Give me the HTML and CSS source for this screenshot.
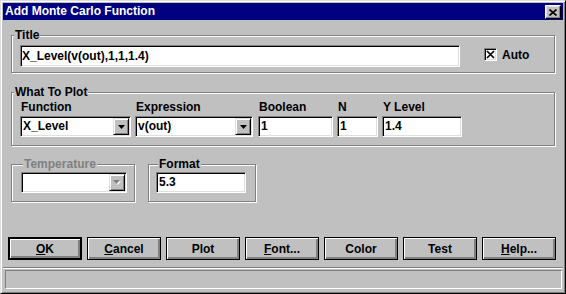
FILE: index.html
```html
<!DOCTYPE html>
<html>
<head>
	<meta charset="utf-8"/>
	<title>Add Monte Carlo Function</title>
	<link rel="stylesheet" href="styles.css">
</head>
<body>
	<div class="window">
		<div class="titlebar">
			<span class="caption">Add Monte Carlo Function</span>
			<span class="close"><svg width="8" height="7" viewBox="0 0 8 7"><path d="M0.5 0.5L7.5 6.5M7.5 0.5L0.5 6.5" stroke="#000" stroke-width="1.6"/></svg></span>
		</div>

		<div class="groups">
			<fieldset class="group group-title">
				<legend>Title</legend>
				<div class="title-row">
					<div class="field w-title">X_Level(v(out),1,1,1.4)</div>
					<label class="check">
						<span class="box"><svg width="9" height="9" viewBox="0 0 9 9"><path d="M1 1L8 8M8 1L1 8" stroke="#000" stroke-width="1.7"/></svg></span>
						Auto
					</label>
				</div>
			</fieldset>

			<fieldset class="group group-plot">
				<legend>What To Plot</legend>
				<div class="plot-row">
					<div class="col">
						<div class="lbl">Function</div>
						<div class="combo w-func">
							<span class="val">X_Level</span>
							<span class="drop"><svg width="7" height="4" viewBox="0 0 7 4"><path d="M0 0H7L3.5 4Z"/></svg></span>
						</div>
					</div>
					<div class="col col-expr">
						<div class="lbl">Expression</div>
						<div class="combo w-expr">
							<span class="val">v(out)</span>
							<span class="drop"><svg width="7" height="4" viewBox="0 0 7 4"><path d="M0 0H7L3.5 4Z"/></svg></span>
						</div>
					</div>
					<div class="col col-bool">
						<div class="lbl">Boolean</div>
						<div class="field w-bool">1</div>
					</div>
					<div class="col col-n">
						<div class="lbl">N</div>
						<div class="field w-n">1</div>
					</div>
					<div class="col col-y">
						<div class="lbl">Y Level</div>
						<div class="field w-y">1.4</div>
					</div>
				</div>
			</fieldset>

			<div class="lower">
				<fieldset class="group group-temp disabled">
					<legend>Temperature</legend>
					<div class="combo w-temp">
						<span class="val"></span>
						<span class="drop"><svg width="8" height="5" viewBox="0 0 8 5"><path d="M1 1H8L4.5 5Z" fill="#fff"/><path d="M0 0H7L3.5 4Z" fill="#808080"/></svg></span>
					</div>
				</fieldset>
				<fieldset class="group group-format">
					<legend>Format</legend>
					<div class="field w-format">5.3</div>
				</fieldset>
			</div>
		</div>

		<div class="buttons">
			<button class="btn default"><u>O</u>K</button>
			<button class="btn"><u>C</u>ancel</button>
			<button class="btn">Plot</button>
			<button class="btn"><u>F</u>ont...</button>
			<button class="btn">Color</button>
			<button class="btn">Test</button>
			<button class="btn"><u>H</u>elp...</button>
		</div>

		<div class="sep"></div>
		<div class="status"></div>
	</div>
</body>
</html>
```

FILE: styles.css
```css
*{margin:0;padding:0;box-sizing:border-box;}
body{
	background:#c0c0c0;
	font:bold 12px "Liberation Sans",Arial,sans-serif;
	color:#000;
}

/* window frame */
.window{
	width:566px;
	height:294px;
	background:#c0c0c0;
	border:1px solid;
	border-color:#dfdfdf #000 #000 #dfdfdf;
	box-shadow:inset 1px 1px #fff,inset -1px -1px #808080;
	padding:2px;
	display:flex;
	flex-direction:column;
}
.titlebar{
	height:17px;
	background:#000080;
	color:#fff;
	display:flex;
	justify-content:space-between;
}
.caption{
	line-height:17px;
	padding-left:2px;
}
.close{
	width:16px;
	height:14px;
	margin:2px 2px 0 0;
	background:#c0c0c0;
	border:1px solid;
	border-color:#fff #000 #000 #fff;
	box-shadow:inset -1px -1px #808080,inset 1px 1px #dfdfdf;
	display:flex;
	align-items:center;
	justify-content:center;
}
.close svg{display:block;}

/* group boxes (horizontal padding lives on the inner rows so the legend stays left) */
.groups{padding:0 8px;}
.group{
	border:1px solid #808080;
	box-shadow:1px 1px #fff,inset 1px 1px #fff;
	min-width:0;
}
.group legend{
	margin-left:2px;
	padding:0 1px;
	line-height:15px;
	background:#c0c0c0;
}
.group-title{
	margin-top:8px;
	padding:2px 0 5px;
}
.group-plot{
	margin-top:12px;
	padding:0 0 8px;
}
.lower{
	margin-top:11px;
	display:flex;
	gap:13px;
}
.group-temp{
	width:124px;
	padding:0 0 8px 9px;
}
.group-format{
	width:108px;
	padding:0 0 8px 7px;
}
.disabled legend{color:#808080;}

/* edit fields */
.field{
	height:22px;
	background:#fff;
	border:1px solid;
	border-color:#808080 #fff #fff #808080;
	box-shadow:inset 1px 1px #000,inset -1px -1px #dfdfdf;
	padding:0 2px;
	line-height:20px;
	white-space:nowrap;
	overflow:hidden;
}
.w-title{width:440px;padding-left:1px;}
.w-bool{width:75px;}
.w-n{width:41px;}
.w-y{width:80px;}
.w-format{width:90px;height:21px;line-height:19px;}

.title-row{display:flex;padding:0 8px;}
.check{
	display:flex;
	align-items:center;
	gap:5px;
	height:13px;
	margin:3px 0 0 24px;
}
.box{
	width:13px;
	height:13px;
	background:#fff;
	border:1px solid;
	border-color:#808080 #fff #fff #808080;
	box-shadow:inset 1px 1px #000,inset -1px -1px #dfdfdf;
	display:flex;
	align-items:center;
	justify-content:center;
}
.box svg{display:block;}

/* plot columns */
.plot-row{display:flex;padding:0 8px;}
.lbl{
	line-height:14px;
	padding-left:1px;
	margin-bottom:2px;
	white-space:nowrap;
}
.col-expr{margin-left:4px;}
.col-bool{margin-left:5px;}
.col-n{margin-left:4px;}
.col-y{margin-left:4px;}
.col .field{height:21px;line-height:19px;}

/* combo boxes */
.combo{
	height:21px;
	background:#fff;
	border:1px solid;
	border-color:#808080 #fff #fff #808080;
	box-shadow:inset 1px 1px #000,inset -1px -1px #dfdfdf;
	display:flex;
}
.w-func{width:111px;}
.w-expr{width:118px;}
.w-temp{width:106px;}
.combo .val{
	flex:1;
	padding-left:2px;
	line-height:19px;
	white-space:nowrap;
}
.drop{
	width:16px;
	height:17px;
	margin:1px;
	background:#c0c0c0;
	border:1px solid;
	border-color:#dfdfdf #000 #000 #dfdfdf;
	box-shadow:inset 1px 1px #fff,inset -1px -1px #808080;
	display:flex;
	align-items:center;
	justify-content:center;
}
.drop svg{display:block;}

/* buttons */
.buttons{
	margin-top:35px;
	padding:0 5px;
	display:flex;
	gap:5px;
}
.btn{
	width:74px;
	height:23px;
	font:inherit;
	color:#000;
	background:#c0c0c0;
	border:1px solid #000;
	box-shadow:inset 1px 1px #fff,inset -1px -1px #808080,inset -2px -2px #808080;
}
.btn.default{border-width:2px;}

.sep{
	margin-top:7px;
	height:2px;
	border-top:1px solid #808080;
	border-bottom:1px solid #fff;
}
.status{
	margin:1px 1px 0 2px;
	height:19px;
	border:1px solid;
	border-color:#808080 #fff #fff #808080;
}
```
